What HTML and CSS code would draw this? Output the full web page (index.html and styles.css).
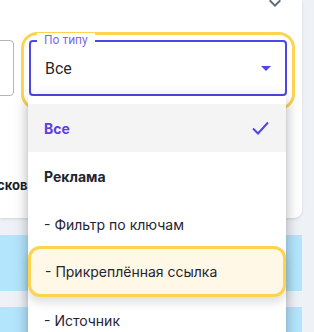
FILE: index.html
```html
<!DOCTYPE html>
<html lang="ru">
<head>
<meta charset="UTF-8" />
<title>Фильтр по типу</title>
<link rel="stylesheet" href="styles.css">
</head>
<body>

<div class="card">
  <div class="card-top">
    <svg class="chevron" width="24" height="24" viewBox="0 0 24 24"><path d="M16.59 8.59 12 13.17 7.41 8.59 6 10l6 6 6-6z" fill="#5f6b7a"/></svg>
  </div>

  <div class="filters">
    <div class="field-cut"></div>
    <div class="mark">
      <div class="select">
        <span class="select-label">По типу</span>
        <span class="select-value">Все</span>
        <svg class="caret" width="24" height="24" viewBox="0 0 24 24"><path d="M7 10l5 5 5-5z" fill="#4f46e5"/></svg>
      </div>
    </div>
  </div>

  <div class="region">Московская область</div>
</div>

<div class="rows">
  <div class="row"></div>
  <div class="row"></div>
</div>

<!-- выпадающее меню -->
<ul class="menu">
  <li class="item item-selected">
    <span>Все</span>
    <svg width="17" height="14" viewBox="0 0 17 14"><polyline points="1,7.5 6,12.5 16,1.5" fill="none" stroke="#4f46e5" stroke-width="2"/></svg>
  </li>
  <li class="item item-group">Реклама</li>
  <li class="item">- Фильтр по ключам</li>
  <li class="item item-marked">- Прикреплённая ссылка</li>
  <li class="item">- Источник</li>
</ul>

</body>
</html>
```

FILE: styles.css
```css
body {
  margin: 0;
  background: #eef1f6;
  font-family: Inter, "Noto Sans", sans-serif;
  overflow: hidden;
  height: 332px;
}
.card {
  width: 302px;
  background: #fff;
  border-radius: 0 0 8px 0;
  box-shadow: 0 1px 3px rgba(0,0,0,0.12);
  padding-bottom: 25px;
}
.card-top {
  height: 32px;
  overflow: hidden;
  display: flex;
  justify-content: flex-end;
  padding-right: 15px;
}
.chevron {
  margin-top: -9px;
}
.filters {
  display: flex;
  align-items: flex-start;
}
.field-cut {
  width: 22px;
  height: 54px;
  margin-left: -10px;
  margin-top: 8px;
  border: 1px solid #b5b5b5;
  border-radius: 4px;
}
.mark {
  margin-left: 7px;
  border: 3px solid #fdd34f;
  border-radius: 16px;
  padding: 5px 5px 11px;
}
.select {
  position: relative;
  width: 233px;
  height: 52px;
  border: 2px solid #4f46e5;
  border-radius: 4px;
  display: flex;
  align-items: center;
  padding: 0 7px 0 14px;
  font-family: Roboto, "Liberation Sans", sans-serif;
}
.select-label {
  position: absolute;
  top: -9px;
  left: 6px;
  padding: 0 7px;
  background: #fff;
  font-size: 12px;
  line-height: 14px;
  color: #7a6af0;
}
.select-value {
  flex: 1;
  font-size: 16px;
  color: rgba(0,0,0,0.87);
}
.region {
  margin-top: 67px;
  margin-left: -23px;
  font-size: 13px;
  line-height: 16px;
  font-weight: 700;
  color: #1a1f2b;
  white-space: nowrap;
}
.rows {
  margin-top: 17px;
  display: flex;
  flex-direction: column;
  gap: 16px;
}
.row {
  width: 302px;
  height: 56px;
  background: #b3e5fc;
}
.menu {
  position: absolute;
  left: 28px;
  top: 96px;
  width: 258px;
  margin: 0;
  padding: 8px 0 0;
  list-style: none;
  background: #fff;
  box-shadow: 0 5px 5px -3px rgba(0,0,0,0.2), 0 8px 10px 1px rgba(0,0,0,0.14), 0 3px 14px 2px rgba(0,0,0,0.12);
}
.item {
  height: 48px;
  display: flex;
  align-items: center;
  justify-content: space-between;
  padding: 0 17px 0 16px;
  font-size: 14px;
  color: #1f2533;
}
.item-selected {
  background: #f4f4f4;
  font-weight: 700;
  color: #5b40e0;
}
.item-group {
  font-weight: 700;
}
.item-marked {
  height: 45px;
  margin: -2px 0 -1px;
  padding-left: 14px;
  border: 3px solid #fdd34f;
  border-radius: 12px;
  background: #fff8e6;
  box-shadow: 0 6px 10px rgba(0,0,0,0.12);
}
```
